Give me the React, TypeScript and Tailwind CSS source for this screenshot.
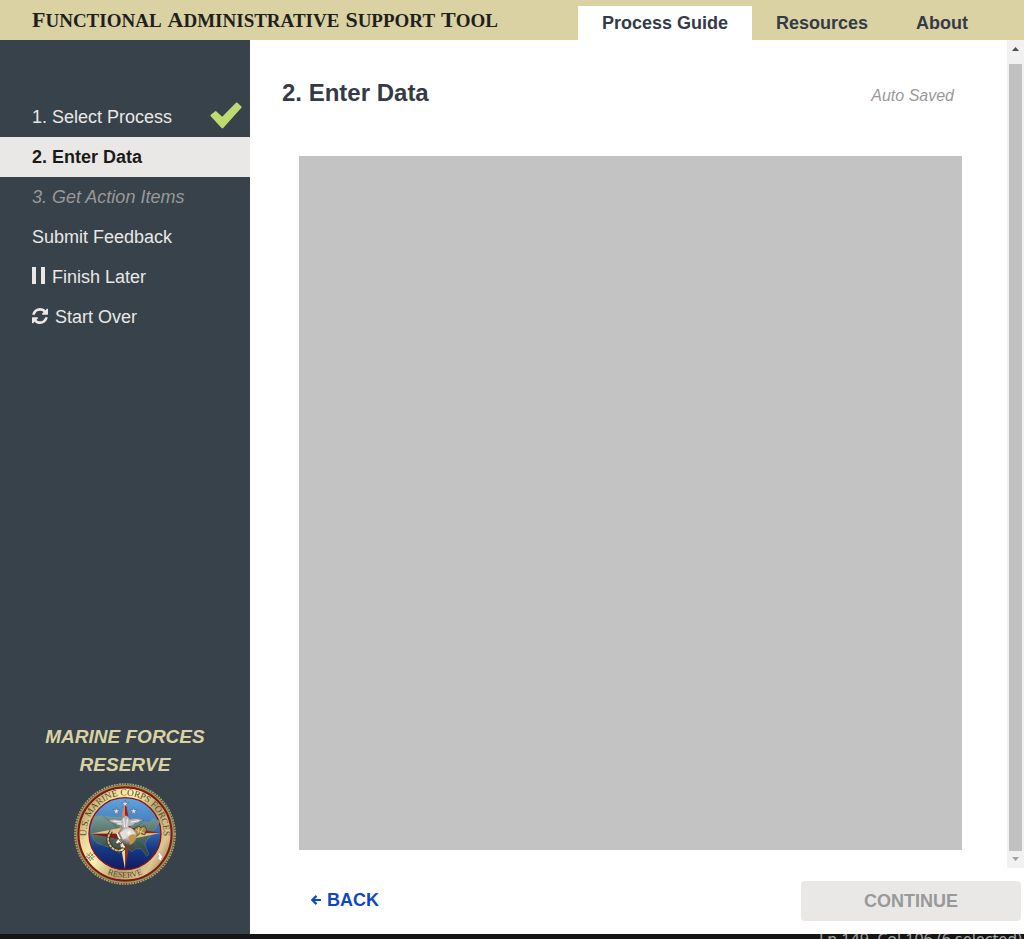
import type { ReactNode } from "react";

const titleWords = ["Functional", "Administrative", "Support", "Tool"];

function CheckIcon() {
  return (
    <svg viewBox="0 0 32 27" className="mb-1 h-[27px] w-8 shrink-0" aria-label="Completed">
      <path
        d="M0.8 12.8 5.2 9.2Q5.9 8.8 6.5 9.4L12.2 14.8 26 .8Q26.7.2 27.4.8L31.4 4.4Q31.9 5 31.4 5.7L13.2 26Q12.4 26.8 11.6 26L.7 14.2Q.2 13.5.8 12.8Z"
        fill="#bedb72"
      />
    </svg>
  );
}

function PauseIcon() {
  return (
    <svg viewBox="0 0 13 17" className="mb-1 h-[17px] w-[13px] shrink-0" aria-hidden="true">
      <path d="M0 0h4v17H0zM9 0h4v17H9z" fill="#e9e8e6" />
    </svg>
  );
}

function RefreshIcon() {
  return (
    <svg viewBox="0 0 1536 1536" className="mb-[2px] h-4 w-4 shrink-0" aria-hidden="true">
      <path
        fill="#e9e8e6"
        d="M1511 928q0 5-1 7-64 268-268 434.500t-478 166.500q-146 0-282.500-55t-243.500-157l-129 129q-19 19-45 19t-45-19-19-45v-448q0-26 19-45t45-19h448q26 0 45 19t19 45-19 45l-137 137q71 66 161 102t187 36q134 0 250-65t186-179q11-17 53-117 8-23 30-23h192q13 0 22.500 9.500t9.500 22.500zm25-800v448q0 26-19 45t-45 19h-448q-26 0-45-19t-19-45 19-45l138-138q-148-137-349-137-134 0-250 65t-186 179q-11 17-53 117-8 23-30 23h-199q-13 0-22.500-9.500t-9.500-22.500v-7q65-268 270-434.500t480-166.500q146 0 284 55.500t245 156.500l130-129q19-19 45-19t45 19 19 45z"
      />
    </svg>
  );
}

function ArrowIcon() {
  return (
    <svg viewBox="0 0 10 10" className="h-[10px] w-[10px] shrink-0" aria-hidden="true">
      <path d="M5.500 .9 1.400 5 5.500 9.100M1.400 5H10" fill="none" stroke="#0f45c9" strokeWidth="2.200" />
    </svg>
  );
}

function Star({ x, y }: { x: number; y: number }) {
  return (
    <path
      transform={`translate(${x} ${y})`}
      d="M0-11 2.500-3 11-3 4 2 7 11 0 5-7 11-4 2-11-3-2.500-3Z"
      fill="#dfe3e8"
      stroke="#4d5c70"
      strokeWidth="1.500"
    />
  );
}

function Seal() {
  return (
    <svg
      viewBox="9 7 312 312"
      className="h-[104px] w-[104px]"
      role="img"
      aria-label="U.S. Marine Corps Forces Reserve seal"
    >
      <defs>
        <linearGradient id="gold" x1="0" y1="0.2" x2="1" y2="0.8">
          <stop offset="0" stopColor="#a38e55" />
          <stop offset="0.2" stopColor="#e8d999" />
          <stop offset="0.38" stopColor="#fff3b4" />
          <stop offset="0.62" stopColor="#b8a26c" />
          <stop offset="0.85" stopColor="#dcc692" />
          <stop offset="1" stopColor="#8c7644" />
        </linearGradient>
        <linearGradient id="sea" x1="0" y1="0" x2="0" y2="1">
          <stop offset="0" stopColor="#5fa5e2" />
          <stop offset="0.4" stopColor="#4279b7" />
          <stop offset="0.7" stopColor="#173a86" />
          <stop offset="1" stopColor="#101b61" />
        </linearGradient>
        <linearGradient id="land" x1="0" y1="0" x2="0" y2="1">
          <stop offset="0" stopColor="#789b91" />
          <stop offset="1" stopColor="#293f3c" />
        </linearGradient>
        <radialGradient id="globe" cx="0.6" cy="0.3" r="0.7">
          <stop offset="0" stopColor="#ffffff" />
          <stop offset="0.45" stopColor="#bbb8b2" />
          <stop offset="1" stopColor="#484037" />
        </radialGradient>
        <path id="upperArc" d="M51.300 185A115.800 115.800 0 1 1 278.700 185" />
        <path id="lowerArc" d="M34 163A131 131 0 0 0 296 163" />
      </defs>
      <circle cx="165" cy="163" r="150" fill="#544829" />
      <circle cx="165" cy="163" r="150" fill="none" stroke="#b3a672" strokeWidth="5" strokeDasharray="5 3" />
      <circle cx="165" cy="163" r="145" fill="none" stroke="#a8945a" strokeWidth="4" />
      <circle cx="165" cy="163" r="139" fill="url(#gold)" stroke="#8d1015" strokeWidth="5" />
      <circle cx="165" cy="162" r="108" fill="url(#sea)" stroke="#8d1015" strokeWidth="4" />
      <path
        d="M73 111 97 108 130 113 154 113 164 120 180 121 190 133 207 130 225 127 239 129 246 119 253 117 257 125 266 121 269 129 258 139 257 147 245 157 242 170 230 182 225 194 231 211 236 224 230 230 221 216 213 208 197 207 186 217 174 206 157 211 147 221 139 212 130 201 114 202 99 197 82 190 71 180 63 160 65 137Z"
        fill="url(#land)"
        stroke="#89a18f"
        strokeWidth="1"
      />
      <path d="M165 162 83 207M165 162 99 108M165 162 224 204M165 162 194 208M165 162 218 129" stroke="#1f3139" strokeOpacity="0.45" strokeWidth="2" />
      <path d="M165 58 149 146 165 162Z" fill="#d68a61" />
      <path d="M165 58 182 146 165 162Z" fill="#a2201c" />
      <path d="M165 268 148 178 165 162Z" fill="#f0d99c" />
      <path d="M165 268 182 178 165 162Z" fill="#8e3520" />
      <path d="M61 162 149 145 165 162Z" fill="#e8bd8a" />
      <path d="M61 162 149 179 165 162Z" fill="#851717" />
      <path d="M271 160 181 144 165 162Z" fill="#9c1e1b" />
      <path d="M271 160 181 179 165 162Z" fill="#e8c489" />
      <Star x={165} y={72} />
      <Star x={139} y={94} />
      <Star x={191} y={94} />
      <path
        d="M114 122Q132 115 153 121L159 111Q168 103 176 112L179 119Q200 112 222 122Q207 125 202 130Q192 130 189 138L176 140 172 151H159L155 139 143 137Q137 130 126 129Z"
        fill="#b9bac0"
        stroke="#5c5961"
        strokeWidth="1.500"
      />
      <path d="M129 124 153 127M183 127 207 123M161 117 164 144M172 117 170 142M143 132 156 133" stroke="#f5f4ee" strokeWidth="3" />
      <path d="M124 154Q103 183 127 205Q147 221 164 204" fill="none" stroke="#463923" strokeWidth="11" />
      <path d="M124 154Q103 183 127 205Q147 221 164 204" fill="none" stroke="#d8c998" strokeWidth="5" strokeDasharray="9 2" />
      <path d="M193 147 207 139 212 144 223 138 230 149 225 165 211 162 191 176Z" fill="#a88745" stroke="#372a1d" strokeWidth="2" />
      <path d="m198 150 24 10m-15-17-3 17m15-15-10 20" stroke="#e0c683" strokeWidth="3" />
      <circle cx="171" cy="171" r="29" fill="url(#globe)" />
      <path d="M149 159 165 149 177 153 166 162 171 174 159 180ZM181 151 196 160 193 181 183 174Z" fill="#e1dfd7" />
      <path d="M175 172Q183 160 196 165Q199 186 180 196Z" fill="#c49448" />
      <path d="M141 160 149 177 140 189 151 184 162 202 154 213" fill="none" stroke="#f4eedb" strokeWidth="5" />
      <path d="M142 173 156 190 139 199M148 204 171 207" fill="none" stroke="#594a32" strokeWidth="3" />
      <g fill="#54462b" fontFamily='"Liberation Serif", serif'>
        <text fontSize="28" textAnchor="middle">
          <textPath href="#upperArc" startOffset="50%">U.S. MARINE CORPS FORCES</textPath>
        </text>
        <text fontSize="25" textAnchor="middle">
          <textPath href="#lowerArc" startOffset="50%">RESERVE</textPath>
        </text>
      </g>
      <path d="M61 218 65 227 74 231 65 235 61 244 57 235 48 231 57 227Z" fill="#f2efdc" stroke="#85734c" strokeWidth="2" />
      <path d="M51 221 71 241M71 221 51 241" stroke="#8d8060" strokeWidth="3" />
      <path d="M269 218 277 230 273 244 263 237 267 229 262 223Z" fill="#ffffff" stroke="#b1a68a" strokeWidth="2" />
    </svg>
  );
}

function SideLink({ children }: { children: ReactNode }) {
  return (
    <a href="#" className="flex h-10 items-center gap-[7px] pl-8 pr-2">
      {children}
    </a>
  );
}

export default function App() {
  return (
    <div className="flex h-screen flex-col overflow-hidden bg-white font-['Liberation_Sans',Arial,sans-serif] text-lg text-[#343b48]">
      <header className="flex h-10 shrink-0 items-end justify-between bg-[#dbd2a4] pl-8 pr-8">
        <h1 className="flex h-10 items-center gap-[6px] whitespace-nowrap pt-px font-['Liberation_Serif',serif] text-[19px] font-bold uppercase text-[#211f1d]">
          {titleWords.map((word) => (
            <span key={word} className="inline-block first-letter:text-[22px]">
              {word}{" "}
            </span>
          ))}
        </h1>
        <nav className="flex h-[34px] font-bold" aria-label="Main">
          <a href="#" aria-current="page" className="flex items-center bg-white px-6">Process Guide</a>
          <a href="#" className="flex items-center px-6">Resources</a>
          <a href="#" className="flex items-center px-6">About</a>
        </nav>
      </header>

      <div className="flex min-h-0 flex-1">
        <aside className="flex w-[250px] shrink-0 flex-col justify-between bg-[#37424a] pb-12 pt-[57px] text-[#e9e8e6]">
          <nav aria-label="Process steps">
            <a href="#" className="flex h-10 items-center justify-between pl-8 pr-2">
              <span>1. Select Process</span>
              <CheckIcon />
            </a>
            <a href="#" aria-current="step" className="flex h-10 items-center bg-[#e9e8e6] pl-8 font-bold text-[#1c1a19]">
              2. Enter Data
            </a>
            <span className="flex h-10 items-center pl-8 italic text-[#999999]">3. Get Action Items</span>
            <SideLink>Submit Feedback</SideLink>
            <SideLink>
              <PauseIcon />
              Finish Later
            </SideLink>
            <SideLink>
              <RefreshIcon />
              Start Over
            </SideLink>
          </nav>
          <div className="flex flex-col items-center">
            <p className="mb-[3px] px-8 text-center text-[19px] font-bold italic leading-7 text-[#dbd2a4]">
              MARINE FORCES
              <br />
              RESERVE
            </p>
            <Seal />
          </div>
        </aside>

        <div className="flex min-w-0 flex-1 flex-col">
          <div className="flex min-h-0 flex-1">
            <main className="flex min-w-0 flex-1 flex-col pb-[18px] pl-8 pt-[37px]">
              <div className="flex items-baseline justify-between pr-[53px]">
                <h2 className="text-2xl font-bold">2. Enter Data</h2>
                <span className="text-base italic text-[#999999]">Auto Saved</span>
              </div>
              <div className="ml-[17px] mr-[45px] mt-[47px] flex-1 bg-[#c3c3c3]" />
            </main>
            <div className="flex w-[17px] shrink-0 flex-col items-center bg-[#f1f1f1]" aria-hidden="true">
              <svg viewBox="0 0 17 24" className="h-6 w-[17px]">
                <path d="M5 11 8.500 7 12 11Z" fill="#505050" />
              </svg>
              <div className="w-[13px] flex-1 bg-[#c1c1c1]" />
              <svg viewBox="0 0 17 17" className="h-[17px] w-[17px]">
                <path d="M5 6h7L8.500 10Z" fill="#a3a3a3" />
              </svg>
            </div>
          </div>
          <footer className="flex h-[66px] shrink-0 items-center justify-between pl-[61px] pr-[3px]">
            <button type="button" className="mb-[2px] flex items-center gap-[6px] font-bold text-[#0f45c9]">
              <ArrowIcon />
              BACK
            </button>
            <button type="button" disabled className="h-10 w-[220px] rounded bg-[#e9e8e6] font-bold text-[#999999]">
              CONTINUE
            </button>
          </footer>
        </div>
      </div>

      <div className="flex h-[5px] shrink-0 justify-end overflow-hidden bg-[#151515] pr-[2px] font-['Noto_Sans',sans-serif] text-base leading-[10px] text-[#a5a5a5]">
        Ln 149, Col 106 (6 selected)
      </div>
    </div>
  );
}
